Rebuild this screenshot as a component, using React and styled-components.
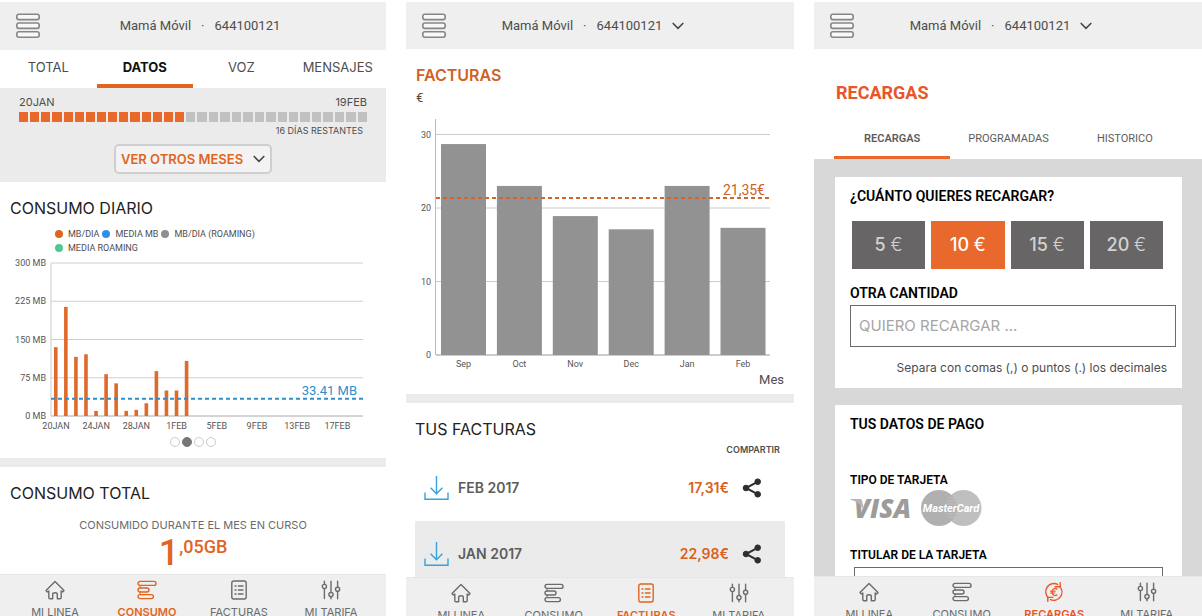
import React from "react";
import styled, { createGlobalStyle, css } from "styled-components";

const ORANGE = "#e0651f";
const BRIGHT = "#e8562a";
const SANS = `Inter, "Liberation Sans", sans-serif`;
const NARROW = `Roboto, "Liberation Sans", sans-serif`;

const GlobalStyle = createGlobalStyle`
  * { box-sizing: border-box; }
  body { margin: 0; background: #fff; color: #222; font-family: ${SANS}; overflow: hidden; }
  button, input { font: inherit; color: inherit; }
  button { background: none; border: 0; padding: 0; cursor: pointer; }
  h1, h2, h3, p, ul { margin: 0; padding: 0; font-weight: 400; }
  ul { list-style: none; }
  svg { display: block; }
`;

/* ---------- shared shell ---------- */

const Screens = styled.main`
  display: grid;
  grid-template-columns: 386fr 388fr 388fr;
  gap: 20px;
  height: 100vh;
  padding-top: 2px;
  overflow: hidden;
`;

const Phone = styled.section`
  display: flex;
  flex-direction: column;
  min-width: 0;
  height: calc(100vh + 6px);
`;

const Header = styled.header`
  flex: none;
  display: grid;
  grid-template-columns: 24px 1fr ${(p) => (p.$picker ? 54 : 26)}px;
  align-items: center;
  height: ${(p) => (p.$picker ? 47 : 48)}px;
  padding-left: 16px;
  background: #efefef;
`;

const Account = styled.div`
  display: flex;
  align-items: center;
  justify-content: center;
  gap: 10px;
  font: 400 13px/20px ${NARROW};
  color: #4d4d4d;
`;

const Body = styled.div`
  flex: 1;
  min-height: 0;
  overflow: hidden;
`;

const Nav = styled.nav`
  flex: none;
  display: grid;
  grid-template-columns: repeat(4, 1fr);
  height: ${(p) => p.$height}px;
  padding: 5px 9px 0;
  background: #efefef;
  border-top: 1px solid #e6e6e6;
`;

const NavItem = styled.a`
  display: flex;
  flex-direction: column;
  align-items: center;
  gap: 4px;
  font: ${(p) => (p.$active ? 600 : 400)} 11px/16px ${SANS};
  color: ${(p) => (p.$active ? p.$color : "#6b6b6b")};
  text-decoration: none;
  white-space: nowrap;
`;

const Band = styled.hr`
  height: 9px;
  margin: 0;
  border: 0;
  background: #ebebeb;
`;

const Title = styled.h2`
  font: ${(p) => (p.$accent ? 600 : 400)} 16px/22px ${SANS};
  color: ${(p) => (p.$accent ? "#d0621f" : "#222")};
`;

/* ---------- consumption ---------- */

const Tabs = styled.div`
  display: grid;
  grid-template-columns: repeat(4, 1fr);
  height: 38px;
`;

const Tab = styled.button`
  border-bottom: 4px solid ${(p) => (p.$active ? ORANGE : "transparent")};
  font: ${(p) => (p.$active ? 700 : 400)} 13px/34px ${SANS};
  color: ${(p) => (p.$active ? "#111" : "#4d4d4d")};
`;

const Cycle = styled.div`
  height: 94px;
  padding: 6px 19px 0;
  background: #ebebeb;
`;

const Dates = styled.div`
  display: flex;
  justify-content: space-between;
  font: 400 11px/16px ${SANS};
  color: #4d4d4d;
`;

const Progress = styled.div`
  display: grid;
  grid-template-columns: 165fr 181fr;
  gap: 2px;
  margin-top: 2px;
`;

const Days = styled.div`
  display: flex;
  gap: 2px;
`;

const Day = styled.span`
  flex: 1;
  height: 10px;
  background: ${(p) => (p.$used ? "#e8692b" : "#c1c1c1")};
`;

const Remaining = styled.p`
  padding: 2px 4px 0 0;
  font: 400 9px/14px ${SANS};
  color: #4d4d4d;
  text-align: right;
`;

const MonthsButton = styled.button`
  display: flex;
  align-items: center;
  justify-content: space-between;
  width: 158px;
  height: 30px;
  margin: 6px auto 0;
  padding: 0 5px;
  border: 2px solid #cfcfcf;
  border-radius: 5px;
  background: #f3f3f3;
  font: 600 13px/20px ${SANS};
  color: ${ORANGE};
`;

const Daily = styled.div`
  height: 276px;
  padding: 15px 0 0;
`;

const Inset = styled.div`
  padding: 0 10px;
`;

const Legend = styled.ul`
  display: flex;
  flex-wrap: wrap;
  width: 230px;
  gap: 0 3px;
  margin: 8px 0 0 55px;
`;

const LegendItem = styled.li`
  display: flex;
  align-items: center;
  gap: 5px;
  font: 400 9px/14px ${NARROW};
  color: #4d4d4d;
  &::before {
    content: "";
    width: 8px;
    height: 8px;
    border-radius: 50%;
    background: ${(p) => p.$color};
  }
`;

const Chart = styled.svg`
  width: 100%;
  height: auto;
  font-family: ${NARROW};
`;

const Pager = styled.div`
  display: flex;
  justify-content: center;
  gap: 2px;
  padding-top: 2px;
`;

const PagerDot = styled.button`
  width: 10px;
  height: 10px;
  border: 1px solid ${(p) => (p.$active ? "#777" : "#ccc")};
  border-radius: 50%;
  background: ${(p) => (p.$active ? "#777" : "#fff")};
`;

const Total = styled.div`
  padding-top: 15px;
`;

const Caption = styled.p`
  margin-top: 13px;
  font: 400 11px/16px ${SANS};
  color: #6b6b6b;
  text-align: center;
`;

const Usage = styled.p`
  display: flex;
  justify-content: center;
  color: ${ORANGE};
`;

const UsageWhole = styled.strong`
  font: 500 36px/40px ${NARROW};
`;

const UsageRest = styled.span`
  font: 500 18px/28px ${NARROW};
`;

/* ---------- invoices ---------- */

const Invoices = styled.div`
  height: 345px;
  padding-top: 15px;
`;

const Unit = styled.p`
  padding: 2px 10px 0;
  font: 400 13px/20px ${NARROW};
  color: #4d4d4d;
`;

const AxisName = styled(Unit)`
  padding-top: 0;
  text-align: right;
`;

const List = styled.div`
  padding: 15px 9px 0;
`;

const ShareHead = styled.p`
  padding: 2px 5px 0 0;
  font: 600 9px/16px ${SANS};
  color: #4d4d4d;
  text-align: right;
`;

const Rows = styled.ul`
  margin-top: -3px !important;
`;

const Invoice = styled.li`
  display: flex;
  align-items: center;
  height: 66px;
  padding: 0 23px 0 9px;
  background: ${(p) => (p.$shaded ? "#ebebeb" : "transparent")};
  font: 600 14px/20px ${SANS};
  color: #5c5c5c;
`;

const Month = styled.span`
  flex: 1;
  padding-left: 9px;
`;

const Amount = styled.span`
  padding-right: 13px;
  color: #d95f1c;
`;

/* ---------- top-up ---------- */

const TopUpHead = styled.div`
  height: 110px;
  padding: 32px 19px 0 20px;
`;

const TopUpTitle = styled.h1`
  padding-left: 2px;
  font: 700 18px/24px ${NARROW};
  color: ${BRIGHT};
`;

const TopUpTabs = styled.div`
  display: grid;
  grid-template-columns: repeat(3, 1fr);
  margin-top: 16px;
`;

const TopUpTab = styled.button`
  height: 38px;
  border-bottom: 3px solid ${(p) => (p.$active ? "#e8692b" : "transparent")};
  font: ${(p) => (p.$active ? 600 : 400)} 11px/35px ${NARROW};
  color: #5c5c5c;
`;

const Backdrop = styled.div`
  display: flex;
  flex-direction: column;
  gap: 17px;
  padding: 18px 20px 0 21px;
  background: #d8d8d8;
`;

const Card = styled.div`
  height: 211px;
  padding: 9px 6px 0 15px;
  background: #fff;
`;

const labelText = css`
  display: block;
  font: 600 14px/20px ${NARROW};
  color: #000;
`;

const CardTitle = styled.h3`
  ${labelText}
`;

const Label = styled.label`
  ${labelText}
`;

const SmallLabel = styled.label`
  ${labelText}
  font-size: 12px;
`;

const Options = styled.div`
  display: grid;
  grid-template-columns: repeat(4, 1fr);
  gap: 6px;
  margin: 15px 13px 14px 2px;
`;

const Option = styled.button`
  height: 48px;
  background: ${(p) => (p.$active ? "#e8692b" : "#676566")};
  font: 500 18px/48px ${SANS};
  color: ${(p) => (p.$active ? "#fff" : "#d2d2d2")};
`;

const Euro = styled.span`
  font-weight: ${(p) => (p.$active ? 400 : 300)};
`;

const Field = styled.input`
  display: block;
  width: 100%;
  height: 42px;
  margin-top: 2px;
  padding: 0 8px 2px;
  border: 1px solid #6b6b6b;
  border-radius: 0;
  background: #fff;
  font: 400 15px/20px ${SANS};
  &::placeholder { color: #a5a5a5; opacity: 1; }
`;

const Hint = styled.p`
  padding: 11px 9px 0 0;
  font: 400 12px/20px ${SANS};
  color: #4d4d4d;
  text-align: right;
`;

const CardType = styled.div`
  margin: 36px 0 19px;
`;

const Logos = styled.div`
  display: flex;
  align-items: center;
  gap: 10px;
  height: 36px;
`;

const Holder = styled.div`
  padding: 0 13px 0 4px;
`;

/* ---------- icons ---------- */

const stroke = { fill: "none", stroke: "currentColor", strokeWidth: 1.4, strokeLinejoin: "round", strokeLinecap: "round" };

const MenuIcon = () => (
  <svg width="24" height="26" viewBox="0 0 24 26" fill="#f8f8f8" stroke="#868686" strokeWidth="1.6">
    <rect x="0.8" y="1.2" width="22.4" height="5.4" rx="2.2" />
    <rect x="0.8" y="10" width="22.4" height="5.4" rx="2.2" />
    <rect x="0.8" y="18.8" width="22.4" height="5.4" rx="2.2" />
  </svg>
);

const Chevron = () => (
  <svg width="12" height="8" viewBox="0 0 12 8" fill="none" stroke="#444" strokeWidth="1.5">
    <path d="M0.7 1l5.3 5.4L11.3 1" />
  </svg>
);

const HomeIcon = () => (
  <svg width="20" height="20" viewBox="0 0 20 20" {...stroke}>
    <path d="M1 10.6 10 1.6l9 9-1.3 1.4-1.5-1v6.6q0 1.2-1.2 1.2h-2.7v-4.4q0-1.6-2.3-1.6t-2.3 1.6v4.4H5q-1.2 0-1.2-1.2V11l-1.500 1z" />
  </svg>
);

const UsageIcon = () => (
  <svg width="20" height="20" viewBox="0 0 20 20" {...stroke}>
    <rect x="1" y="1.4" width="18" height="4" rx="2" />
    <rect x="1" y="8" width="11" height="4" rx="2" />
    <rect x="1" y="14.6" width="15.4" height="4" rx="2" />
    <path d="M3 5.4v2.6M3 12v2.6" strokeWidth="1" />
  </svg>
);

const InvoiceIcon = () => (
  <svg width="20" height="20" viewBox="0 0 20 20" {...stroke}>
    <rect x="2.8" y="1" width="14.4" height="18" rx="2" />
    <path d="M6 6h1M6 10h1M6 14h1M9.4 6H14M9.4 10H14M9.4 14H14" />
  </svg>
);

const RateIcon = () => (
  <svg width="20" height="20" viewBox="0 0 20 20" {...stroke}>
    <path d="M3.4 1.2v3.2M3.4 8.6v10M10 1.2v11.2M10 16.8v2M16.6 1.2v6M16.6 11.4v7.4" />
    <circle cx="3.4" cy="6.5" r="2.1" />
    <circle cx="10" cy="14.6" r="2.1" />
    <circle cx="16.6" cy="9.3" r="2.1" />
  </svg>
);

const TopUpIcon = () => (
  <svg width="20" height="20" viewBox="0 0 20 20" {...stroke}>
    <path d="M4.2 15.600A8.200 8.200 0 0 1 13.600 2.400M15.800 4.600A8.200 8.200 0 0 1 6.400 17.600" />
    <path d="M11.200 4.800 16.200 4.800 16.200 0.800M8.800 15.400 3.800 15.400 3.800 19.400" />
    <path d="M13 7.200q-1.200-1-2.500-.7-2.400.6-2.400 3.500t2.400 3.500q1.300.3 2.500-.7M6.600 9.100h4.600M6.600 11h4.200" strokeWidth="1.200" />
  </svg>
);

const DownloadIcon = () => (
  <svg width="25" height="26" viewBox="0 0 25 26" fill="none" stroke="#35a3dc" strokeWidth="1.4">
    <path d="M12.5 1v18M6.6 12.8l5.9 6 5.9-6M1 17.6v6.6h23v-6.6" />
  </svg>
);

const ShareIcon = () => (
  <svg width="20" height="20" viewBox="0 0 20 20" fill="#2e2e2e" stroke="#2e2e2e">
    <path d="M16 3.6 4 10l12 6.4" fill="none" strokeWidth="2" />
    <circle cx="15.7" cy="3.7" r="2.8" />
    <circle cx="4" cy="10" r="2.8" />
    <circle cx="15.7" cy="16.3" r="2.8" />
  </svg>
);

const VisaLogo = () => (
  <svg width="61" height="36" viewBox="0 0 61 36" role="img" aria-label="VISA">
    <text x="4" y="28" fontFamily='"Open Sans", sans-serif' fontStyle="italic" fontWeight="800" fontSize="26" fill="#9c9c9c">VISA</text>
    <path d="M0.500 9h9.200q2 0 2.400 2l1.600 8.500Q9 11.500 0.500 9.700z" fill="#b4b4b4" />
  </svg>
);

const MasterCardLogo = () => (
  <svg width="61" height="36" viewBox="0 0 61 36" role="img" aria-label="MasterCard">
    <circle cx="42.500" cy="18" r="18" fill="#bfbfbf" />
    <circle cx="18" cy="18" r="18" fill="#b0b0b0" />
    <path d="M27 8h7M26 11h9M26 14h10M26 24h9M27 27h7" stroke="#bfbfbf" strokeWidth="1" />
    <text x="30" y="22" textAnchor="middle" fontFamily="Roboto, sans-serif" fontStyle="italic" fontWeight="700" fontSize="11" fill="#fff">MasterCard</text>
  </svg>
);

/* ---------- charts ---------- */

const DAILY = [135, 214, 116, 121, 10, 82, 64, 10, 12, 25, 88, 50, 50, 108];
const DAY_LABELS = ["20JAN", "24JAN", "28JAN", "1FEB", "5FEB", "9FEB", "13FEB", "17FEB"];

function DailyChart() {
  const y = (mb) => 161 - mb * 0.51;
  return (
    <Chart viewBox="0 0 386 180" role="img" aria-label="Consumo diario en MB">
      {[300, 225, 150, 75, 0].map((v) => (
        <g key={v}>
          <line x1="51" x2="363" y1={y(v)} y2={y(v)} stroke={v ? "#cfcfcf" : "#aaa"} />
          <text x="46" y={y(v) + 3} textAnchor="end" fontSize="9" fill="#555">{v} MB</text>
        </g>
      ))}
      <line x1="51" x2="51" y1={y(300)} y2={y(0)} stroke="#ccc" />
      {DAILY.map((v, i) => (
        <rect key={i} x={54 + i * 10.06} y={y(v)} width="3.6" height={v * 0.51} fill="#de6a2b" />
      ))}
      <line x1="51" x2="363" y1={y(34)} y2={y(34)} stroke="#2f8fca" strokeWidth="2" strokeDasharray="4 3" />
      <text x="357" y="140" textAnchor="end" fontSize="13" fill="#2f8fca">33.41 MB</text>
      {DAY_LABELS.map((d, i) => (
        <text key={d} x={56 + i * 40.2} y="174" textAnchor="middle" fontSize="9" fill="#555">{d}</text>
      ))}
    </Chart>
  );
}

const MONTHLY = [["Sep", 28.7], ["Oct", 23], ["Nov", 18.9], ["Dec", 17.1], ["Jan", 23], ["Feb", 17.3]];

function MonthlyChart() {
  const y = (eur) => 247 - eur * 7.35;
  return (
    <Chart viewBox="0 0 388 262" role="img" aria-label="Facturas por mes">
      {[30, 20, 10, 0].map((v) => (
        <g key={v}>
          <line x1="30" x2="364" y1={y(v)} y2={y(v)} stroke={v ? "#ccc" : "#999"} />
          <text x="25" y={y(v) + 3} textAnchor="end" fontSize="9" fill="#555">{v}</text>
        </g>
      ))}
      <line x1="29.5" x2="29.5" y1="11" y2="247" stroke="#bbb" />
      {MONTHLY.map(([m, v], i) => (
        <g key={m}>
          <rect x={35 + i * 55.9} y={y(v)} width="45" height={v * 7.35} fill="#929292" />
          <text x={57.5 + i * 55.9} y="259" textAnchor="middle" fontSize="9" fill="#555">{m}</text>
        </g>
      ))}
      <line x1="30" x2="364" y1={y(21.35)} y2={y(21.35)} stroke="#d0672a" strokeWidth="2" strokeDasharray="4 3" />
      <text x="359" y="87" textAnchor="end" fontSize="14" fill="#d0621f">21,35€</text>
    </Chart>
  );
}

/* ---------- screens ---------- */

function TopBar({ picker }) {
  return (
    <Header $picker={picker}>
      <button aria-label="Menú"><MenuIcon /></button>
      <Account as={picker ? "button" : "div"}>
        <span>Mamá Móvil</span>
        <span>·</span>
        <span>644100121</span>
        {picker && <Chevron />}
      </Account>
    </Header>
  );
}

function BottomNav({ items, active, color, height }) {
  return (
    <Nav $height={height}>
      {items.map(([label, Icon]) => (
        <NavItem key={label} href="#" $active={label === active} $color={color}>
          <Icon />
          {label}
        </NavItem>
      ))}
    </Nav>
  );
}

const HOME = ["MI LINEA", HomeIcon];
const USE = ["CONSUMO", UsageIcon];
const BILLS = ["FACTURAS", InvoiceIcon];
const TOPUP = ["RECARGAS", TopUpIcon];
const RATE = ["MI TARIFA", RateIcon];

function UsageScreen() {
  return (
    <Phone>
      <TopBar />
      <Body>
        <Tabs>
          {["TOTAL", "DATOS", "VOZ", "MENSAJES"].map((t) => (
            <Tab key={t} $active={t === "DATOS"}>{t}</Tab>
          ))}
        </Tabs>
        <Cycle>
          <Dates><span>20JAN</span><span>19FEB</span></Dates>
          <Progress>
            <Days>{Array.from({ length: 15 }, (_, i) => <Day key={i} $used />)}</Days>
            <Days>{Array.from({ length: 16 }, (_, i) => <Day key={i} />)}</Days>
          </Progress>
          <Remaining>16 DÍAS RESTANTES</Remaining>
          <MonthsButton>VER OTROS MESES <Chevron /></MonthsButton>
        </Cycle>
        <Daily>
          <Inset><Title>CONSUMO DIARIO</Title></Inset>
          <Legend>
            <LegendItem $color="#e0651f">MB/DIA</LegendItem>
            <LegendItem $color="#2f8fe8">MEDIA MB</LegendItem>
            <LegendItem $color="#8e8e8e">MB/DIA (ROAMING)</LegendItem>
            <LegendItem $color="#52c596">MEDIA ROAMING</LegendItem>
          </Legend>
          <DailyChart />
          <Pager>
            {[1, 2, 3, 4].map((n) => (
              <PagerDot key={n} $active={n === 2} aria-label={`Página ${n}`} />
            ))}
          </Pager>
        </Daily>
        <Band />
        <Total>
          <Inset><Title>CONSUMO TOTAL</Title></Inset>
          <Caption>CONSUMIDO DURANTE EL MES EN CURSO</Caption>
          <Usage><UsageWhole>1</UsageWhole><UsageRest>,05GB</UsageRest></Usage>
        </Total>
      </Body>
      <BottomNav items={[HOME, USE, BILLS, RATE]} active="CONSUMO" color={ORANGE} height={50} />
    </Phone>
  );
}

function InvoicesScreen() {
  return (
    <Phone>
      <TopBar picker />
      <Body>
        <Invoices>
          <Inset><Title $accent>FACTURAS</Title></Inset>
          <Unit>€</Unit>
          <MonthlyChart />
          <AxisName>Mes</AxisName>
        </Invoices>
        <Band />
        <List>
          <Title>TUS FACTURAS</Title>
          <ShareHead>COMPARTIR</ShareHead>
          <Rows>
            {[["FEB 2017", "17,31€"], ["JAN 2017", "22,98€"]].map(([month, amount], i) => (
              <Invoice key={month} $shaded={i % 2 === 1}>
                <button aria-label={`Descargar ${month}`}><DownloadIcon /></button>
                <Month>{month}</Month>
                <Amount>{amount}</Amount>
                <button aria-label={`Compartir ${month}`}><ShareIcon /></button>
              </Invoice>
            ))}
          </Rows>
        </List>
      </Body>
      <BottomNav items={[HOME, USE, BILLS, RATE]} active="FACTURAS" color={ORANGE} height={47} />
    </Phone>
  );
}

function TopUpScreen() {
  return (
    <Phone>
      <TopBar picker />
      <Body>
        <TopUpHead>
          <TopUpTitle>RECARGAS</TopUpTitle>
          <TopUpTabs>
            {["RECARGAS", "PROGRAMADAS", "HISTORICO"].map((t, i) => (
              <TopUpTab key={t} $active={i === 0}>{t}</TopUpTab>
            ))}
          </TopUpTabs>
        </TopUpHead>
        <Backdrop>
          <Card>
            <CardTitle>¿CUÁNTO QUIERES RECARGAR?</CardTitle>
            <Options>
              {[5, 10, 15, 20].map((n) => (
                <Option key={n} $active={n === 10} aria-pressed={n === 10}>
                  {n} <Euro $active={n === 10}>€</Euro>
                </Option>
              ))}
            </Options>
            <Label htmlFor="amount">OTRA CANTIDAD</Label>
            <Field id="amount" placeholder="QUIERO RECARGAR ..." />
            <Hint>Separa con comas (,) o puntos (.) los decimales</Hint>
          </Card>
          <Card>
            <CardTitle>TUS DATOS DE PAGO</CardTitle>
            <CardType>
              <SmallLabel as="p">TIPO DE TARJETA</SmallLabel>
              <Logos><VisaLogo /><MasterCardLogo /></Logos>
            </CardType>
            <SmallLabel htmlFor="holder">TITULAR DE LA TARJETA</SmallLabel>
            <Holder><Field id="holder" /></Holder>
          </Card>
        </Backdrop>
      </Body>
      <BottomNav items={[HOME, USE, TOPUP, RATE]} active="RECARGAS" color={BRIGHT} height={48} />
    </Phone>
  );
}

export default function App() {
  return (
    <>
      <GlobalStyle />
      <Screens>
        <UsageScreen />
        <InvoicesScreen />
        <TopUpScreen />
      </Screens>
    </>
  );
}
